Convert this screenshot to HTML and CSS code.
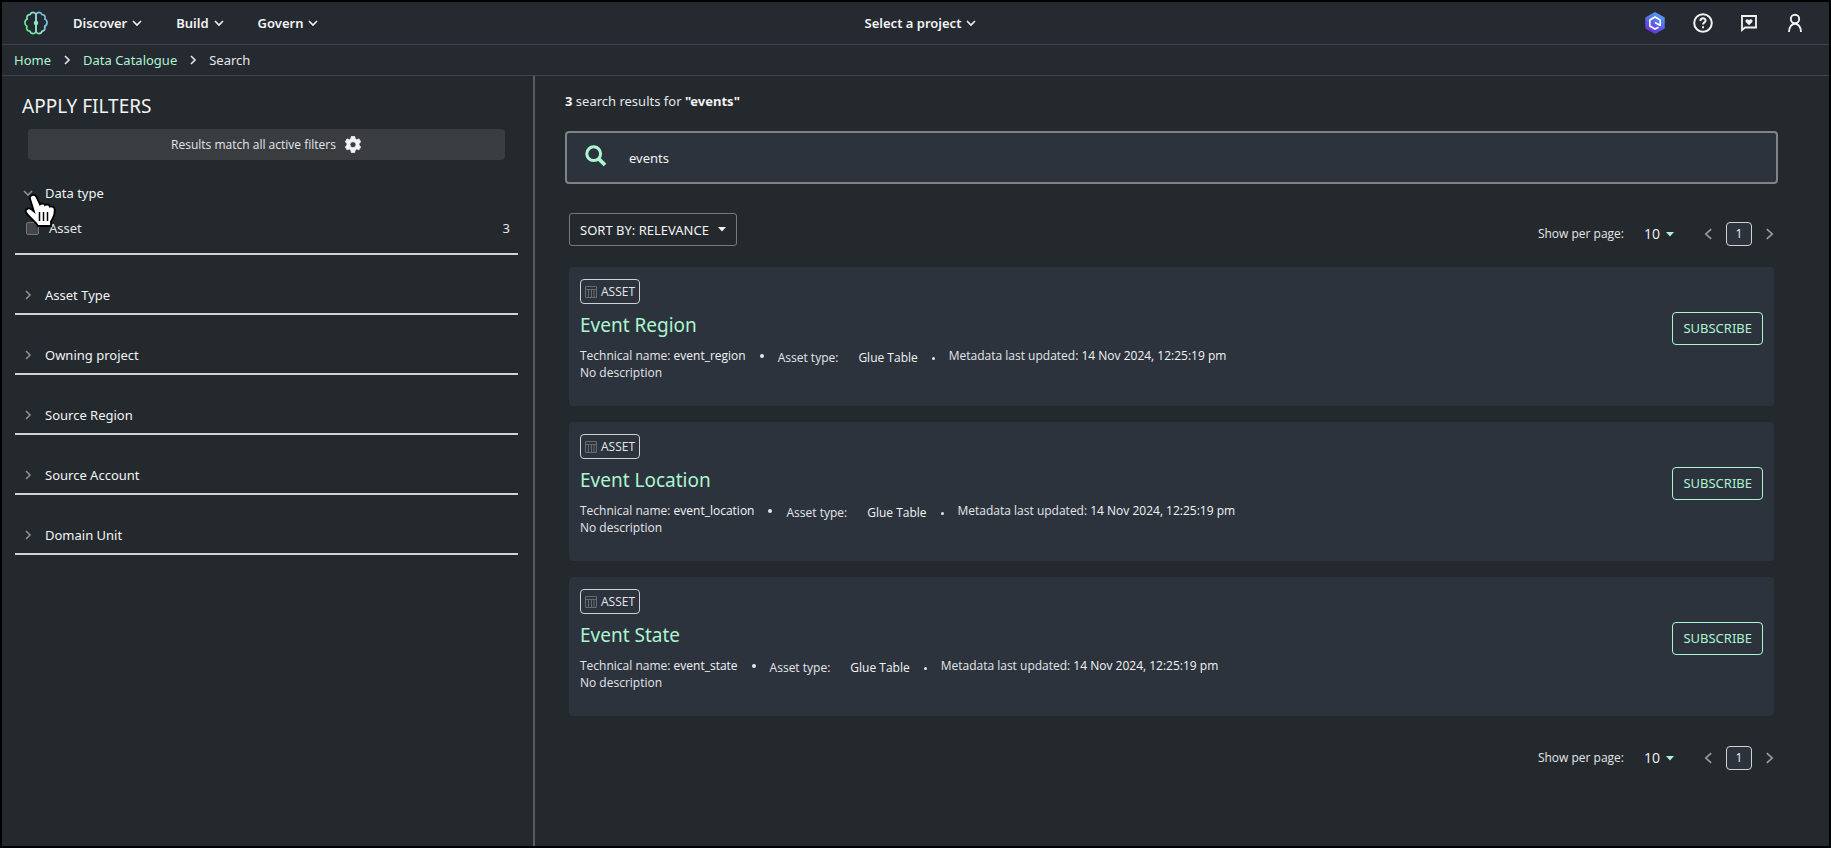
FILE: index.html
```html
<!DOCTYPE html>
<html lang="en">
<head>
<meta charset="utf-8">
<title>Search - Data Catalogue</title>
<meta name="viewport" content="width=device-width, initial-scale=1">
<link rel="stylesheet" href="styles.css">
</head>
<body>
<svg class="sprite" aria-hidden="true">
  <defs>
    <symbol id="chev-down" viewBox="0 0 10 10"><path d="M1 3l4 4 4-4" fill="none" stroke="currentColor" stroke-width="1.6"/></symbol>
    <symbol id="chev-right" viewBox="0 0 10 10"><path d="M3 1l4 4-4 4" fill="none" stroke="currentColor" stroke-width="1.6"/></symbol>
    <symbol id="caret" viewBox="0 0 8 5"><path d="M0 0h8L4 4.500z" fill="currentColor"/></symbol>
    <symbol id="page-prev" viewBox="0 0 10 14"><path d="M8 1.500L2 7l6 5.500" fill="none" stroke="currentColor" stroke-width="1.800"/></symbol>
    <symbol id="page-next" viewBox="0 0 10 14"><path d="M2 1.500L8 7l-6 5.500" fill="none" stroke="currentColor" stroke-width="1.800"/></symbol>
    <symbol id="grid" viewBox="0 0 12 12"><path d="M.5.5h11v11H.5zM.5 3.500h11M3.500 3.500v8M6.500 3.500v8M9 3.500v8" fill="none" stroke="currentColor" stroke-width="1"/></symbol>
  </defs>
</svg>
<div class="app">
  <header class="topbar">
    <div class="topbar-side">
      <a class="logo" href="#" aria-label="Home page">
        <svg width="24" height="24" viewBox="0 0 24 24" fill="none" stroke="url(#logo-grad)" stroke-width="1.700" stroke-linejoin="round" stroke-linecap="round">
          <defs><linearGradient id="logo-grad" x1="0" y1="18" x2="24" y2="4" gradientUnits="userSpaceOnUse"><stop offset="0" stop-color="#5fe88c"/><stop offset=".5" stop-color="#8fe6c8"/><stop offset="1" stop-color="#6aa5f0"/></linearGradient></defs>
          <path d="M12 3.500C11 .8 7 .6 6 3.600 3.500 3.400 2.200 5.500 3.200 8 .2 9.200.2 14 3 15.300 1.800 18 3.400 20.300 6 20.200 7 23.400 11 23.200 12 20.500z"/>
          <path d="M12 3.500C13 .8 17 .6 18 3.600c2.500-.2 3.800 1.900 2.800 4.400 3 1.200 3 6-.2 7.300 1.200 2.700-.4 5-2.600 4.900-1 3.200-5 3-6 .3z"/>
          <circle cx="12" cy="12" r="1.400" fill="#8fe6c8"/>
        </svg>
      </a>
      <nav class="menu" aria-label="Main">
        <button class="menu-item" type="button">Discover<svg class="chev"><use href="#chev-down"/></svg></button>
        <button class="menu-item" type="button">Build<svg class="chev"><use href="#chev-down"/></svg></button>
        <button class="menu-item" type="button">Govern<svg class="chev"><use href="#chev-down"/></svg></button>
      </nav>
    </div>
    <button class="menu-item project" type="button">Select a project<svg class="chev"><use href="#chev-down"/></svg></button>
    <div class="topbar-side tools">
      <button class="tool" type="button" aria-label="Assistant">
        <svg width="22" height="22" viewBox="0 0 22 22">
          <defs><linearGradient id="q-grad" x1="16" y1="1" x2="6" y2="21" gradientUnits="userSpaceOnUse"><stop offset="0" stop-color="#4fa3f7"/><stop offset=".55" stop-color="#5a5fe8"/><stop offset="1" stop-color="#6b2fd0"/></linearGradient></defs>
          <path d="M11 1l9 5v10l-9 5-9-5V6z" fill="url(#q-grad)" stroke="url(#q-grad)" stroke-width="1.500" stroke-linejoin="round"/>
          <path d="M14.500 15.200L11 17l-5.200-3V8L11 5l5.200 3v5.500L11 10.500" fill="none" stroke="#fff" stroke-width="1.600" stroke-linejoin="round"/>
        </svg>
      </button>
      <button class="tool" type="button" aria-label="Help">
        <svg width="20" height="20" viewBox="0 0 20 20" fill="none" stroke="#f2f3f5" stroke-width="2"><circle cx="10" cy="10" r="8.800"/><path d="M7.400 8c0-3.600 5.400-3.400 5.200-.3C12.500 9.500 10 9.400 10 11.600"/><path d="M10 13.200v2"/></svg>
      </button>
      <button class="tool" type="button" aria-label="Feedback">
        <svg width="18" height="18" viewBox="0 0 18 18"><path d="M2 2h14v11.500H5L2 16z" fill="none" stroke="#f2f3f5" stroke-width="1.800"/><path d="M9 11.300L5.700 8C4.600 5.800 7.600 4.300 9 6.300c1.400-2 4.400-.5 3.300 1.700z" fill="#f2f3f5"/></svg>
      </button>
      <button class="tool" type="button" aria-label="Account">
        <svg width="20" height="20" viewBox="0 0 20 20" fill="none" stroke="#f2f3f5" stroke-width="1.900"><circle cx="10" cy="6" r="4.200"/><path d="M4 19c0-11 12-11 12 0"/></svg>
      </button>
    </div>
  </header>

  <nav class="crumbs" aria-label="Breadcrumb">
    <a href="#">Home</a>
    <svg class="chev"><use href="#chev-right"/></svg>
    <a href="#">Data Catalogue</a>
    <svg class="chev"><use href="#chev-right"/></svg>
    <span>Search</span>
  </nav>

  <div class="columns">
    <aside class="filters">
      <h2 class="filters-title">APPLY FILTERS</h2>
      <button class="match" type="button">Results match all active filters
        <svg width="18" height="18" viewBox="0 0 18 18" fill="#f2f3f5"><path fill-rule="evenodd" d="M7.300.5h3.400l.5 2.300 1.500.9 2.300-.8 1.700 3-1.700 1.500v1.800l1.700 1.600-1.700 3-2.300-.8-1.500.9-.5 2.600H7.300l-.5-2.600-1.500-.9-2.300.8-1.700-3L3 9.200V7.400L1.300 5.900l1.700-3 2.300.8 1.500-.9zM9 5.700a3 3 0 1 0 0 6 3 3 0 0 0 0-6z" stroke="#f2f3f5" stroke-width=".8" stroke-linejoin="round"/></svg>
      </button>

      <section class="group group-open">
        <button class="group-head" type="button" aria-expanded="true"><svg class="chev"><use href="#chev-down"/></svg>Data type</button>
        <div class="option">
          <input id="type-asset" type="checkbox">
          <label for="type-asset">Asset</label>
          <span class="count">3</span>
        </div>
        <svg class="pointer" width="34" height="36" viewBox="0 0 34 36" aria-hidden="true">
          <path d="M8 2.200c2.200-1 4 .2 4.700 2.200L16 11.500c1.500-1.600 4.400-1.200 5.100.6 1.800-1.200 4.400-.4 4.800 1.500 2.600-.7 4.800.8 4.800 3.100.2 4.600-1.200 8.200-3.700 11.700V33H13.800c-.8-2.400-4.500-5.600-7.500-8.600-2-2-5-4.600-4.600-6.800.5-2.600 3.800-2.600 5.700-1.200l2.500 2L6 5.800c-.5-1.500.2-3 2-3.600z" fill="#fff" stroke="#000" stroke-width="1.800"/>
          <path d="M15.500 19v9M19.500 19v9M23.500 19v9" stroke="#000" stroke-width="1.500"/>
        </svg>
      </section>
      <section class="group"><button class="group-head" type="button" aria-expanded="false"><svg class="chev"><use href="#chev-right"/></svg>Asset Type</button></section>
      <section class="group"><button class="group-head" type="button" aria-expanded="false"><svg class="chev"><use href="#chev-right"/></svg>Owning project</button></section>
      <section class="group"><button class="group-head" type="button" aria-expanded="false"><svg class="chev"><use href="#chev-right"/></svg>Source Region</button></section>
      <section class="group"><button class="group-head" type="button" aria-expanded="false"><svg class="chev"><use href="#chev-right"/></svg>Source Account</button></section>
      <section class="group"><button class="group-head" type="button" aria-expanded="false"><svg class="chev"><use href="#chev-right"/></svg>Domain Unit</button></section>
    </aside>

    <main class="results">
      <p class="summary"><b>3</b> search results for <b>"events"</b></p>
      <div class="search">
        <svg width="22" height="22" viewBox="0 0 22 22" fill="none" stroke="#adf5d0"><circle cx="8.700" cy="8.700" r="6.900" stroke-width="3"/><path d="M13.800 13.800l6.200 6.200" stroke-width="3.800"/></svg>
        <input type="text" value="events" aria-label="Search the catalogue">
      </div>

      <div class="list">
        <div class="toolbar">
          <button class="sort" type="button">SORT BY: RELEVANCE<svg class="caret"><use href="#caret"/></svg></button>
          <div class="pager">
            <label for="per-page-top">Show per page:</label>
            <span class="per-page"><select id="per-page-top"><option>10</option><option>20</option></select><svg class="caret"><use href="#caret"/></svg></span>
            <button class="step" type="button" aria-label="Previous page"><svg><use href="#page-prev"/></svg></button>
            <button class="page" type="button" aria-current="page">1</button>
            <button class="step" type="button" aria-label="Next page"><svg><use href="#page-next"/></svg></button>
          </div>
        </div>

        <article class="card">
          <div class="card-body">
            <span class="badge"><svg><use href="#grid"/></svg>ASSET</span>
            <h3><a href="#">Event Region</a></h3>
            <div class="meta"><span>Technical name: <em>event_region</em></span><i class="dot"></i><span class="kind">Asset type:<em>Glue Table</em></span><i class="dot dot-small"></i><span>Metadata last updated: <em>14 Nov 2024, 12:25:19 pm</em></span></div>
            <p>No description</p>
          </div>
          <button class="subscribe" type="button">SUBSCRIBE</button>
        </article>
        <article class="card">
          <div class="card-body">
            <span class="badge"><svg><use href="#grid"/></svg>ASSET</span>
            <h3><a href="#">Event Location</a></h3>
            <div class="meta"><span>Technical name: <em>event_location</em></span><i class="dot"></i><span class="kind">Asset type:<em>Glue Table</em></span><i class="dot dot-small"></i><span>Metadata last updated: <em>14 Nov 2024, 12:25:19 pm</em></span></div>
            <p>No description</p>
          </div>
          <button class="subscribe" type="button">SUBSCRIBE</button>
        </article>
        <article class="card">
          <div class="card-body">
            <span class="badge"><svg><use href="#grid"/></svg>ASSET</span>
            <h3><a href="#">Event State</a></h3>
            <div class="meta"><span>Technical name: <em>event_state</em></span><i class="dot"></i><span class="kind">Asset type:<em>Glue Table</em></span><i class="dot dot-small"></i><span>Metadata last updated: <em>14 Nov 2024, 12:25:19 pm</em></span></div>
            <p>No description</p>
          </div>
          <button class="subscribe" type="button">SUBSCRIBE</button>
        </article>

        <div class="toolbar toolbar-end">
          <div class="pager">
            <label for="per-page-end">Show per page:</label>
            <span class="per-page"><select id="per-page-end"><option>10</option><option>20</option></select><svg class="caret"><use href="#caret"/></svg></span>
            <button class="step" type="button" aria-label="Previous page"><svg><use href="#page-prev"/></svg></button>
            <button class="page" type="button" aria-current="page">1</button>
            <button class="step" type="button" aria-label="Next page"><svg><use href="#page-next"/></svg></button>
          </div>
        </div>
      </div>
    </main>
  </div>
</div>
</body>
</html>
```

FILE: styles.css
```css
:root {
  --bg: #24292d;
  --bar: #252930;
  --card: #2c333d;
  --line: #40444c;
  --text: #e4e6ea;
  --bright: #f2f3f5;
  --mint: #adf5d0;
  --small-font: "Open Sans", "Noto Sans", sans-serif;
}

* { box-sizing: border-box; }

body {
  margin: 0;
  background: var(--bg);
  color: var(--text);
  font: 14px/20px "Noto Sans", "Open Sans", sans-serif;
}

button, input, select {
  margin: 0;
  padding: 0;
  border: 0;
  background: none;
  color: inherit;
  font: inherit;
}

button { cursor: pointer; }
a { color: var(--mint); text-decoration: none; }
h2, h3, p { margin: 0; font-weight: 400; }
em { font-style: normal; color: var(--bright); }
svg { display: block; flex: none; }

.sprite { position: absolute; width: 0; height: 0; }
.chev { width: 10px; height: 10px; }
.caret { width: 8px; height: 5px; }

.app {
  display: flex;
  flex-direction: column;
  min-height: 100vh;
  border: 2px solid #000;
}

.topbar {
  display: flex;
  align-items: center;
  height: 43px;
  padding: 0 24px 0 22px;
  background: var(--bar);
  border-bottom: 1px solid var(--line);
  color: var(--bright);
}

.topbar-side { display: flex; flex: 1; align-items: center; }
.menu { display: flex; gap: 34px; margin-left: 25px; }

.menu-item {
  display: flex;
  align-items: center;
  gap: 5px;
  font-size: 13px;
  font-weight: 600;
}

.project { margin-left: 12px; }
.tools { justify-content: flex-end; gap: 27px; }

.crumbs {
  display: flex;
  align-items: center;
  gap: 11px;
  height: 31px;
  padding: 0 12px;
  background: var(--bar);
  border-bottom: 1px solid var(--line);
  font-size: 13px;
}

.columns {
  display: grid;
  flex: 1;
  grid-template-columns: 533px minmax(0, 1fr);
}

.filters {
  padding: 16px 15px 16px 13px;
  border-right: 2px solid #5b5c60;
}

.filters-title {
  padding-left: 7px;
  font-size: 19px;
  line-height: 28px;
  color: var(--bright);
}

.match {
  display: flex;
  align-items: center;
  justify-content: center;
  gap: 8px;
  width: calc(100% - 26px);
  height: 31px;
  margin: 9px 13px 0;
  border-radius: 4px;
  background: #393d40;
  font-family: var(--small-font);
  font-size: 12px;
}

.group {
  position: relative;
  height: 60px;
  padding: 30px 8px 0;
  border-bottom: 2px solid #d2d2d6;
}

.group-open { height: 95px; padding-top: 23px; }

.group-head {
  display: flex;
  align-items: center;
  gap: 12px;
  font-size: 13px;
  color: var(--bright);
}

.group-head .chev { color: #8b8e94; }

.option {
  display: flex;
  align-items: center;
  margin-top: 15px;
  padding-left: 3px;
  font-size: 13px;
}

.option input {
  width: 13px;
  height: 13px;
  margin-right: 10px;
  border: 1px solid #77747c;
  border-radius: 2px;
  background: #45454c;
  appearance: none;
}

.count { margin-left: auto; }
.pointer { position: absolute; left: 9px; top: 33px; }

.results { padding: 15px 51px 24px 30px; }
.summary { font-size: 13px; }
.summary b { color: var(--bright); }

.search {
  display: flex;
  align-items: center;
  gap: 22px;
  height: 53px;
  margin-top: 20px;
  padding: 0 18px;
  border: 2px solid #808287;
  border-radius: 4px;
  background: var(--card);
}

.search svg { margin-bottom: 4px; }
.search input { flex: 1; min-width: 0; outline: 0; font-size: 13px; color: var(--bright); }

.list { display: grid; gap: 16px; padding: 29px 4px 0; }

.toolbar {
  display: flex;
  align-items: center;
  justify-content: space-between;
  margin-bottom: 5px;
}

.toolbar-end { justify-content: flex-end; margin: 14px 0 0; }

.sort {
  display: flex;
  align-items: center;
  gap: 9px;
  height: 33px;
  padding: 0 10px;
  border: 1px solid #77797e;
  border-radius: 3px;
  font-size: 13px;
  color: var(--bright);
}

.pager {
  display: flex;
  align-items: center;
  font-family: var(--small-font);
  font-size: 12px;
}

.toolbar:first-child .pager { padding-top: 8px; }

.per-page { position: relative; margin: 0 30px 0 20px; }
.per-page select { display: block; width: 30px; font-size: 14px; color: var(--bright); appearance: none; outline: 0; }
.per-page .caret { position: absolute; right: 0; top: 8px; color: var(--mint); pointer-events: none; }

.step { color: #9a9da3; }
.step svg { width: 9px; height: 14px; }

.page {
  width: 26px;
  height: 24px;
  margin: 0 13px;
  border: 1px solid #d2d2d6;
  border-radius: 4px;
  background: var(--card);
  color: var(--bright);
}

.card {
  display: flex;
  align-items: flex-start;
  justify-content: space-between;
  min-height: 139px;
  padding: 12px 11px;
  border-radius: 4px;
  background: var(--card);
  font-family: var(--small-font);
  font-size: 12px;
  line-height: 17px;
}

.badge {
  display: inline-flex;
  align-items: center;
  gap: 4px;
  height: 25px;
  padding: 0 4px;
  border: 1px solid #d2d2d6;
  border-radius: 4px;
}

.badge svg { width: 12px; height: 12px; color: #666a73; }

.card h3 {
  margin-top: 7px;
  font-family: "Noto Sans", sans-serif;
  font-size: 19px;
  line-height: 28px;
}

.meta { display: flex; height: 17px; margin-top: 8px; }
.kind { padding-top: 2px; }
.kind em { margin-left: 20px; }

.dot {
  width: 4px;
  height: 4px;
  margin: 7px 14px 0;
  border-radius: 50%;
  background: var(--text);
}

.dot-small { width: 3px; height: 3px; margin-top: 10px; }

.subscribe {
  height: 33px;
  margin-top: 33px;
  padding: 0 10px;
  border: 1px solid var(--mint);
  border-radius: 4px;
  font-family: "Noto Sans", sans-serif;
  font-size: 13px;
  color: var(--mint);
}
```
